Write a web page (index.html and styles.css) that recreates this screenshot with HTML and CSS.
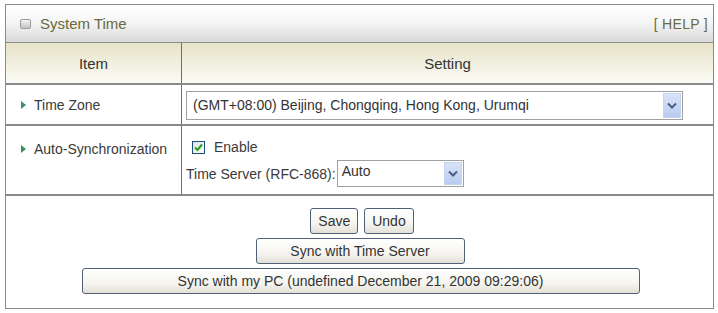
FILE: index.html
```html
<!DOCTYPE html>
<html lang="en">
<head>
  <meta charset="UTF-8">
  <title>System Time</title>
  <link rel="stylesheet" href="styles.css">
</head>
<body>
  <div class="panel">
    <div class="title-bar">
      <span class="title"><span class="title-icon"></span>System Time</span>
      <span class="help">[ HELP ]</span>
    </div>

    <div class="row head">
      <div class="cell label-col">Item</div>
      <div class="cell setting-col">Setting</div>
    </div>

    <div class="row zone-row">
      <div class="cell label-col"><span class="label"><span class="arrow"></span>Time Zone</span></div>
      <div class="cell setting-col">
        <div class="select wide">
          <span class="select-text">(GMT+08:00) Beijing, Chongqing, Hong Kong, Urumqi</span>
          <span class="select-btn">
            <svg width="10" height="7" viewBox="0 0 10 7"><path d="M1 1.5 L5 5.5 L9 1.5" fill="none" stroke="#4a5d85" stroke-width="2"/></svg>
          </span>
        </div>
      </div>
    </div>

    <div class="row sync-row">
      <div class="cell label-col"><span class="label"><span class="arrow"></span>Auto-Synchronization</span></div>
      <div class="cell setting-col stack">
        <label class="check-line">
          <span class="checkbox">
            <svg width="11" height="11" viewBox="0 0 11 11"><path d="M2 5.5 L4.5 8 L9 2.5" fill="none" stroke="#21a121" stroke-width="2"/></svg>
          </span>
          Enable
        </label>
        <div class="server-line">
          Time Server (RFC-868):
          <div class="select small">
            <span class="select-text">Auto</span>
            <span class="select-btn">
              <svg width="10" height="7" viewBox="0 0 10 7"><path d="M1 1.5 L5 5.5 L9 1.5" fill="none" stroke="#4a5d85" stroke-width="2"/></svg>
            </span>
          </div>
        </div>
      </div>
    </div>

    <div class="buttons">
      <div class="btn-line">
        <button class="btn">Save</button>
        <button class="btn">Undo</button>
      </div>
      <button class="btn sync-server">Sync with Time Server</button>
      <button class="btn sync-pc">Sync with my PC (undefined December 21, 2009 09:29:06)</button>
    </div>
  </div>
</body>
</html>
```

FILE: styles.css
```css
body {
  margin: 0;
  padding: 4px 4px 0 5px;
  font-family: "Liberation Sans", Arial, sans-serif;
  font-size: 14px;
  color: #3a3a3a;
  background: #fff;
}

.panel {
  width: 707px;
  height: 303px;
  border: 1px solid #8a8a8a;
  display: flex;
  flex-direction: column;
}

.title-bar {
  height: 37px;
  border-bottom: 1px solid #8c8c8c;
  background: linear-gradient(#ffffff 0%, #f6f6f6 45%, #d9d9d9 100%);
  display: flex;
  align-items: center;
  justify-content: space-between;
  padding: 0 5px 0 14px;
  color: #6b6a3c;
  font-size: 15px;
}

.title {
  display: flex;
  align-items: center;
}

.title-icon {
  width: 9px;
  height: 8px;
  border: 1px solid #9a9a9a;
  border-radius: 2px;
  background: linear-gradient(#f4f4f4, #c4c4c4);
  margin-right: 9px;
}

.help {
  font-size: 14px;
  letter-spacing: 0.3px;
}

.row {
  display: flex;
  border-bottom: 2px solid #8a8a8a;
}

.cell {
  display: flex;
  align-items: center;
}

.label-col {
  width: 176px;
  border-right: 1px solid #6e6e6e;
  padding-left: 10px;
  box-sizing: border-box;
}

.setting-col {
  flex: 1;
  padding-left: 4px;
}

.head {
  height: 40px;
  background: linear-gradient(#e7e3c9 0%, #f2f0e0 55%, #fcfcf7 100%);
  color: #333;
  font-size: 15px;
}

.head .cell {
  justify-content: center;
  padding-left: 0;
}

.label {
  display: flex;
  align-items: center;
}

.arrow {
  width: 0;
  height: 0;
  border-left: 5px solid #3e8e64;
  border-top: 4px solid transparent;
  border-bottom: 4px solid transparent;
  margin-right: 8px;
  margin-left: 5px;
}

.zone-row {
  height: 39px;
}

.sync-row {
  height: 68px;
}

.sync-row .label-col {
  align-items: flex-start;
  padding-top: 15px;
}

.select {
  display: flex;
  align-items: center;
  justify-content: space-between;
  border: 1px solid #a0a0a0;
  box-sizing: border-box;
  background: #fff;
  padding: 1px;
}

.select.wide {
  width: 497px;
  height: 29px;
  margin-top: 1px;
}

.select.small {
  width: 127px;
  height: 27px;
  margin-left: 1px;
}

.select-text {
  padding-left: 5px;
  color: #333;
}

.select.small .select-text {
  align-self: flex-start;
  padding-left: 3px;
  padding-top: 1px;
}

.select-btn {
  width: 18px;
  height: 100%;
  box-sizing: border-box;
  border: 1px solid #c4d3ef;
  background: linear-gradient(#d9e4f8, #b9cbf1);
  display: flex;
  align-items: center;
  justify-content: center;
}

.stack {
  flex-direction: column;
  align-items: flex-start;
  justify-content: center;
}

.check-line {
  display: flex;
  align-items: center;
  margin-left: 6px;
  margin-top: 2px;
  height: 24px;
}

.checkbox {
  width: 11px;
  height: 11px;
  border: 1px solid #1e4f7c;
  background: linear-gradient(135deg, #e2e2dc, #ffffff);
  margin-right: 9px;
  display: flex;
}

.server-line {
  display: flex;
  align-items: center;
  margin-top: 1px;
}

.buttons {
  flex: 1;
  display: flex;
  flex-direction: column;
  align-items: center;
  padding-top: 12px;
  gap: 4px;
}

.btn-line {
  display: flex;
  gap: 6px;
  margin-left: 5px;
}

.btn {
  font-family: "Liberation Sans", Arial, sans-serif;
  font-size: 14px;
  color: #333;
  height: 26px;
  padding: 0 7px;
  border: 1px solid #4f6178;
  border-radius: 3px;
  background: linear-gradient(#ffffff 0%, #f5f4ef 60%, #e3e0d6 100%);
}

.sync-server {
  width: 209px;
  margin-left: 1px;
}

.sync-pc {
  width: 558px;
  margin-left: 2px;
}
```
